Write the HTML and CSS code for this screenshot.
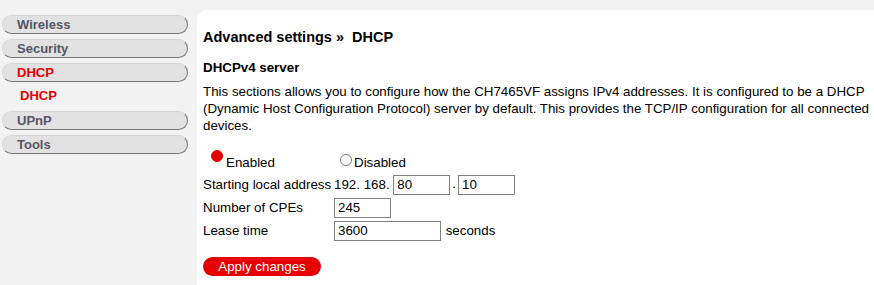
FILE: index.html
```html
<!DOCTYPE html>
<html lang="en">
<head>
<meta charset="UTF-8">
<title>Advanced settings - DHCP</title>
<link rel="stylesheet" href="styles.css">
</head>
<body>

<div class="page">
  <!-- left menu -->
  <ul class="menu">
    <li class="pill"><a href="#">Wireless</a></li>
    <li class="pill"><a href="#">Security</a></li>
    <li class="pill active"><a href="#">DHCP</a></li>
    <li class="sub active"><a href="#">DHCP</a></li>
    <li class="pill"><a href="#">UPnP</a></li>
    <li class="pill"><a href="#">Tools</a></li>
  </ul>

  <!-- main panel -->
  <div class="panel">
    <h1 class="crumb">Advanced settings &raquo;&nbsp; DHCP</h1>
    <h2 class="sub-title">DHCPv4 server</h2>
    <p class="intro">
      This sections allows you to configure how the CH7465VF assigns IPv4 addresses. It is configured to be a DHCP
      (Dynamic Host Configuration Protocol) server by default. This provides the TCP/IP configuration for all connected
      devices.
    </p>

    <table class="form">
      <tr class="radio-row">
        <td><label><span class="radio on"></span>Enabled</label></td>
        <td><label><span class="radio"></span>Disabled</label></td>
      </tr>
      <tr>
        <td>Starting local address</td>
        <td>192. 168. <input type="text" class="ip" value="80"><span class="dot">.</span><input type="text" class="ip" value="10"></td>
      </tr>
      <tr>
        <td>Number of CPEs</td>
        <td><input type="text" class="short" value="245"></td>
      </tr>
      <tr>
        <td>Lease time</td>
        <td><input type="text" class="long" value="3600"> seconds</td>
      </tr>
    </table>

    <a href="#" class="btn">Apply changes</a>
  </div>
</div>

</body>
</html>
```

FILE: styles.css
```css
/* base */
* {
  margin: 0;
  padding: 0;
  box-sizing: border-box;
}

body {
  font-family: "Liberation Sans", Arial, sans-serif;
  font-size: 13.33px;
  background: #f2f2f2;
  color: #000;
}

a {
  text-decoration: none;
  color: inherit;
}

.page {
  display: flex;
  align-items: stretch;
  min-height: 285px;
}

/* menu */
.menu {
  list-style: none;
  width: 197px;
  flex-shrink: 0;
  padding: 15px 0 0 2px;
}

.menu li {
  width: 186px;
  font-weight: 700;
  font-size: 13px;
  color: #555566;
}

.menu .pill {
  height: 19px;
  line-height: 17px;
  margin-bottom: 5px;
  padding-left: 14px;
  background: #e2e2e2;
  border: 1px solid #d6d6d6;
  border-right-color: #777;
  border-bottom-color: #777;
  border-radius: 10px;
}

.menu .sub {
  height: 24px;
  line-height: 18px;
  padding-left: 18px;
}

.menu .active {
  color: #e60000;
}

/* content */
.panel {
  flex: 1;
  margin-top: 10px;
  background: #fff;
  border-radius: 10px 0 0 0;
  padding: 19px 0 0 6px;
}

.crumb {
  font-size: 14.5px;
  line-height: 17px;
  font-weight: 700;
  margin-bottom: 14px;
}

.sub-title {
  font-size: 13.33px;
  line-height: 15px;
  font-weight: 700;
  margin-bottom: 8px;
}

.intro {
  line-height: 17px;
  margin-bottom: 15px;
}

.form {
  border-collapse: collapse;
}

.form td {
  padding: 0;
  height: 23px;
  line-height: 15px;
  white-space: nowrap;
}

.form td:first-child {
  width: 131px;
}

.radio-row td {
  height: 24px;
  padding-top: 6px;
  vertical-align: top;
}

.radio-row td:first-child {
  padding-left: 8px;
}

.radio {
  display: inline-block;
  width: 12px;
  height: 12px;
  border-radius: 50%;
  border: 1px solid #777;
  margin: -2px 2px 0 6px;
  vertical-align: 1px;
}

.radio.on {
  background: #e60000;
  border-color: #e60000;
  margin: -6px 3px 0 0;
  vertical-align: 5px;
}

.form input {
  font-family: inherit;
  font-size: 13.33px;
  height: 20px;
  border: 1px solid #808080;
  padding: 0 3px;
  vertical-align: middle;
}

.form .dot {
  margin: 0 2px;
}

.form .ip {
  width: 57px;
}

.form .short {
  width: 57px;
}

.form .long {
  width: 107px;
  margin-right: 1px;
}

/* button */
.btn {
  display: block;
  margin-top: 15px;
  width: 118px;
  height: 19px;
  line-height: 19px;
  text-align: center;
  background: #e60000;
  color: #fff;
  border-radius: 10px;
}
```
